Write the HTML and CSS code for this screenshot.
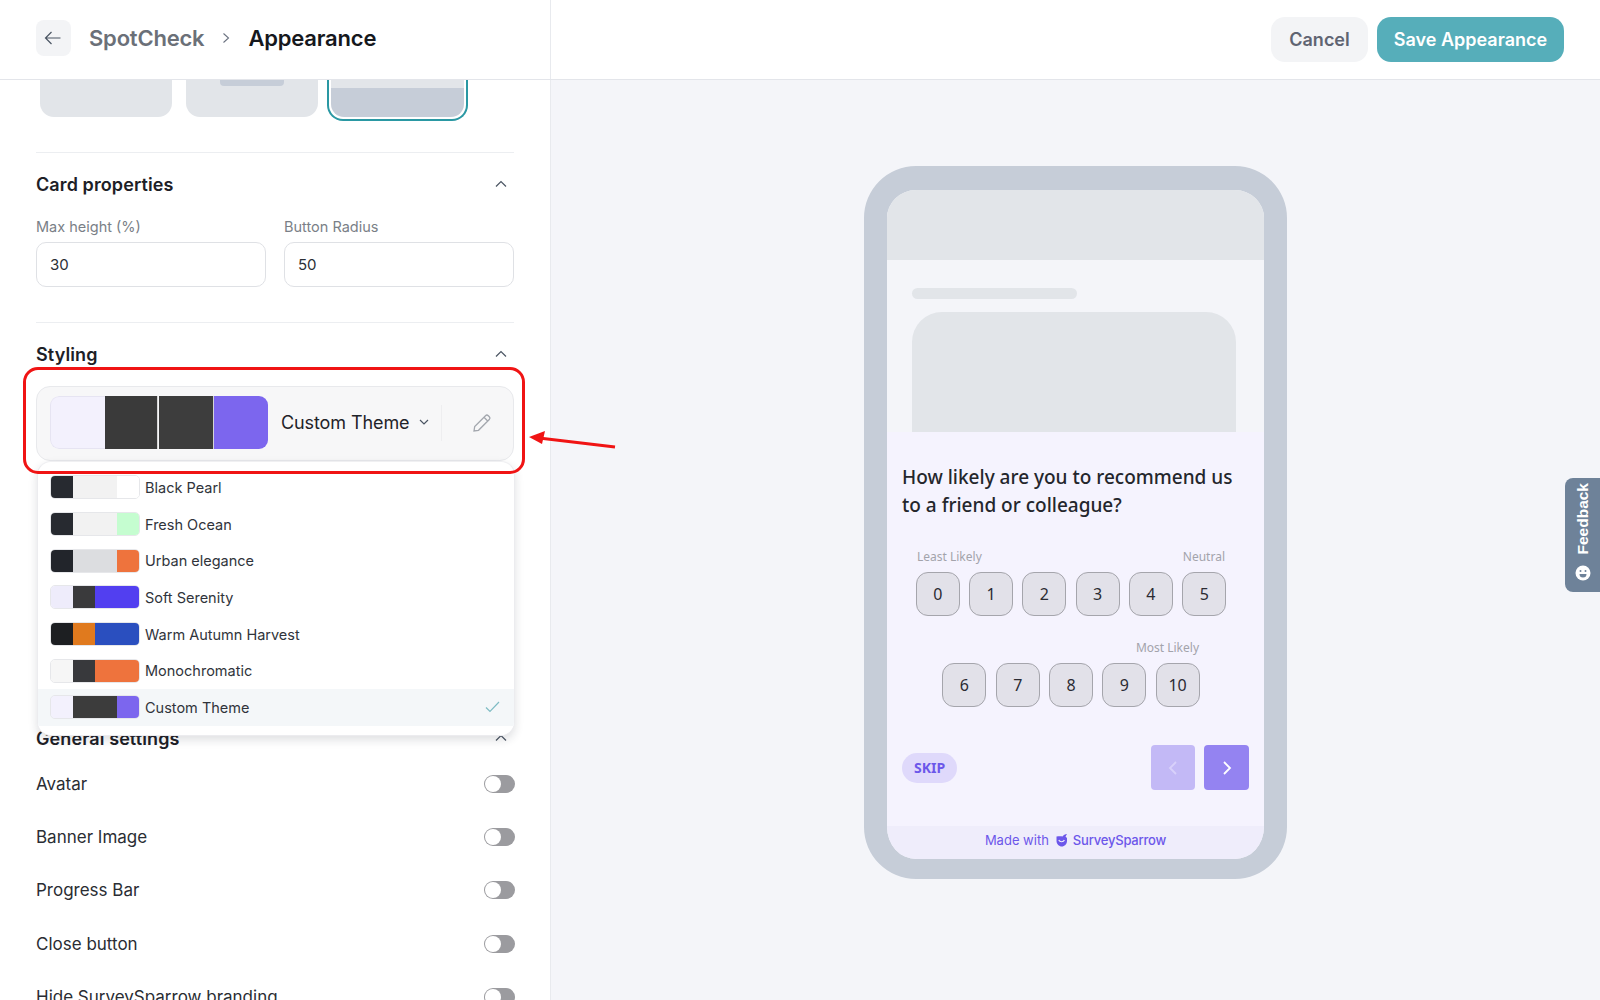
FILE: index.html
```html
<!DOCTYPE html>
<html lang="en">
<head>
    <meta charset="UTF-8">
    <meta name="viewport" content="width=device-width, initial-scale=1.0">
    <title>SpotCheck Appearance</title>
    <link rel="stylesheet" href="styles.css">
</head>
<body>
    <header class="topbar">
        <div class="crumbs">
            <button class="back-btn" aria-label="Back">
                <svg width="17" height="14" viewBox="0 0 17 14" fill="none" stroke="#4b5563" stroke-width="1.2"><path d="M16.5 7H1.5M7.5 1 1.5 7l6 6"/></svg>
            </button>
            <span class="crumb-parent">SpotCheck</span>
            <svg class="crumb-sep" width="8" height="12" viewBox="0 0 8 12" fill="none" stroke="#6b7280" stroke-width="1.1"><path d="m1.5 1.5 5 4.5-5 4.5"/></svg>
            <span class="crumb-current">Appearance</span>
        </div>
        <div class="actions">
            <button class="btn btn-cancel">Cancel</button>
            <button class="btn btn-save">Save Appearance</button>
        </div>
    </header>

    <main class="main">
        <aside class="sidebar">
            <div class="thumbs">
                <div class="thumb"></div>
                <div class="thumb"><span class="thumb-bar"></span></div>
                <div class="thumb thumb-active"><div class="thumb-inner"></div></div>
            </div>

            <section class="section section-card">
                <div class="section-head">
                    <h2>Card properties</h2>
                    <svg class="chev" width="12" height="8" viewBox="0 0 12 8" fill="none" stroke="#4b5563" stroke-width="1.2"><path d="m1 6.5 5-5 5 5"/></svg>
                </div>
                <div class="fields">
                    <div class="field">
                        <label>Max height (%)</label>
                        <div class="input">30</div>
                    </div>
                    <div class="field">
                        <label>Button Radius</label>
                        <div class="input">50</div>
                    </div>
                </div>
            </section>

            <section class="section section-styling">
                <div class="section-head">
                    <h2>Styling</h2>
                    <svg class="chev" width="12" height="8" viewBox="0 0 12 8" fill="none" stroke="#4b5563" stroke-width="1.2"><path d="m1 6.5 5-5 5 5"/></svg>
                </div>
                <div class="theme-box">
                    <div class="big-swatch">
                        <span class="seg-a"></span><span class="seg-b"></span><span class="seg-c"></span><span class="seg-d"></span>
                    </div>
                    <span class="theme-name">Custom Theme</span>
                    <svg class="theme-chev" width="10" height="7" viewBox="0 0 10 7" fill="none" stroke="#4b5563" stroke-width="1.2"><path d="m1 1 4 4 4-4"/></svg>
                    <span class="theme-div"></span>
                    <svg class="pencil" width="20" height="20" viewBox="0 0 20 20" fill="none" stroke="#a3a7ae" stroke-width="1.3"><path d="m2 18 .7-4.5L13.5 2.700a2 2 0 0 1 2.800 0l1 1a2 2 0 0 1 0 2.800L6.500 17.300ZM12 4.300l3.700 3.700"/></svg>
                </div>
            </section>

            <section class="section-general">
                <div class="section-head">
                    <h2>General settings</h2>
                    <svg class="chev" width="12" height="8" viewBox="0 0 12 8" fill="none" stroke="#4b5563" stroke-width="1.2"><path d="m1 6.5 5-5 5 5"/></svg>
                </div>
                <div class="toggle-row"><span>Avatar</span><span class="toggle"></span></div>
                <div class="toggle-row"><span>Banner Image</span><span class="toggle"></span></div>
                <div class="toggle-row"><span>Progress Bar</span><span class="toggle"></span></div>
                <div class="toggle-row"><span>Close button</span><span class="toggle"></span></div>
                <div class="toggle-row"><span>Hide SurveySparrow branding</span><span class="toggle"></span></div>
            </section>

            <div class="theme-menu">
                <div class="theme-opt">
                    <div class="mini"><span class="w1" style="background:#272a30"></span><span class="w2" style="background:#f2f2f2"></span><span class="w1" style="background:#fff"></span></div>
                    <span>Black Pearl</span>
                </div>
                <div class="theme-opt">
                    <div class="mini"><span class="w1" style="background:#272a30"></span><span class="w2" style="background:#f2f2f2"></span><span class="w1" style="background:#c5fdd0"></span></div>
                    <span>Fresh Ocean</span>
                </div>
                <div class="theme-opt">
                    <div class="mini"><span class="w1" style="background:#22252b"></span><span class="w2" style="background:#dcdde0"></span><span class="w1" style="background:#ee733d"></span></div>
                    <span>Urban elegance</span>
                </div>
                <div class="theme-opt">
                    <div class="mini"><span class="w1" style="background:#eeecfb"></span><span class="w1" style="background:#3a3a3c"></span><span class="w2" style="background:#523ff0"></span></div>
                    <span>Soft Serenity</span>
                </div>
                <div class="theme-opt">
                    <div class="mini"><span class="w1" style="background:#1d1f22"></span><span class="w1" style="background:#e07a1e"></span><span class="w2" style="background:#2a4fbf"></span></div>
                    <span>Warm Autumn Harvest</span>
                </div>
                <div class="theme-opt">
                    <div class="mini"><span class="w1" style="background:#f6f6f6"></span><span class="w1" style="background:#38393c"></span><span class="w2" style="background:#ee733d"></span></div>
                    <span>Monochromatic</span>
                </div>
                <div class="theme-opt theme-opt-active">
                    <div class="mini"><span class="w1" style="background:#f3f1fd"></span><span class="w2" style="background:#3c3c3c"></span><span class="w1" style="background:#7c66ee"></span></div>
                    <span>Custom Theme</span>
                    <svg class="check" width="15" height="12" viewBox="0 0 15 12" fill="none" stroke="#7fbcc4" stroke-width="1.2"><path d="m1 6.5 4 4L14 1"/></svg>
                </div>
            </div>

            <div class="red-box"></div>
        </aside>

        <section class="preview">
            <div class="phone">
                <div class="phone-top"></div>
                <div class="phone-body">
                    <div class="skel-line"></div>
                    <div class="skel-block"></div>
                </div>
                <div class="card">
                    <p class="question">How likely are you to recommend us<br>to a friend or colleague?</p>
                    <div class="scale-labels scale-labels-1"><span>Least Likely</span><span>Neutral</span></div>
                    <div class="scale-row">
                        <span class="num">0</span><span class="num">1</span><span class="num">2</span><span class="num">3</span><span class="num">4</span><span class="num">5</span>
                    </div>
                    <div class="scale-labels scale-labels-2"><span>Most Likely</span></div>
                    <div class="scale-row">
                        <span class="num">6</span><span class="num">7</span><span class="num">8</span><span class="num">9</span><span class="num">10</span>
                    </div>
                    <div class="card-nav">
                        <span class="skip">SKIP</span>
                        <div class="nav-btns">
                            <span class="nav-btn nav-prev"><svg width="10" height="16" viewBox="0 0 10 16" fill="none" stroke="#d8d1fa" stroke-width="1.8"><path d="M8 2 2 8l6 6"/></svg></span>
                            <span class="nav-btn nav-next"><svg width="10" height="16" viewBox="0 0 10 16" fill="none" stroke="#fff" stroke-width="1.8"><path d="m2 2 6 6-6 6"/></svg></span>
                        </div>
                    </div>
                </div>
                <div class="phone-foot">
                    <span>Made with</span>
                    <svg class="ss-logo" width="13" height="14" viewBox="0 0 13 14"><path d="M1.5 3.5C4 3 6 3 7.500 3.500 8.500 2 10 1 12 1l-1.500 2.500L12 5v3c0 3-2.500 5.500-5.200 5.500S1.500 11 1.500 8Z" fill="#6c57ea"/><path d="M3.800 7c1 2.300 4.600 2.300 5.600 0" fill="none" stroke="#efedfb" stroke-width="1.2"/></svg>
                    <span class="ss-name">SurveySparrow</span>
                </div>
            </div>
        </section>
    </main>

    <svg class="red-arrow" width="90" height="16" viewBox="0 0 90 16"><path d="M86 13 10 4" stroke="#f01414" stroke-width="3"/><path d="M0 3 16 -3 13 10Z" fill="#f01414"/></svg>

    <div class="feedback">
        <span class="feedback-text">Feedback</span>
        <svg width="16" height="16" viewBox="0 0 16 16"><circle cx="8" cy="8" r="7.5" fill="#fff"/><circle cx="5.5" cy="6" r="1" fill="#6e8299"/><circle cx="10.5" cy="6" r="1" fill="#6e8299"/><path d="M4.500 9h7a3.500 3.500 0 0 1-7 0Z" fill="#6e8299"/></svg>
    </div>
</body>
</html>
```

FILE: styles.css
```css
*{
    box-sizing: border-box;
}
body{
    font-family: Inter, "Liberation Sans", sans-serif;
    margin: 0;
    padding: 0;
    height: 1000px;
    overflow: hidden;
    color: #1f2329;
    background: #f4f5f9;
    position: relative;
}
button{
    font-family: inherit;
    border: none;
}
h2{
    margin: 0;
    font-size: 18px;
    font-weight: 600;
    letter-spacing: 0.1px;
    color: #1d2026;
}

/* top bar */
.topbar{
    height: 80px;
    display: flex;
    background: #fff;
    border-bottom: 1px solid #e3e5ea;
}
.crumbs{
    width: 551px;
    display: flex;
    align-items: center;
    padding: 0 0 3px 36px;
    border-right: 1px solid #e8eaee;
}
.back-btn{
    width: 35px;
    height: 36px;
    margin-right: 18px;
    border-radius: 8px;
    background: #f3f4f6;
    display: flex;
    align-items: center;
    justify-content: center;
    padding: 0 2px 0 0;
}
.crumb-parent{
    font-size: 22px;
    font-weight: 600;
    letter-spacing: -0.2px;
    color: #6b7078;
}
.crumb-sep{
    margin: 0 18px;
}
.crumb-current{
    font-size: 22px;
    font-weight: 600;
    letter-spacing: -0.2px;
    color: #16181d;
}
.actions{
    flex: 1;
    display: flex;
    justify-content: flex-end;
    gap: 9px;
    padding: 17px 36px 0 0;
}
.btn{
    height: 45px;
    border-radius: 14px;
    font-size: 18px;
    font-weight: 600;
}
.btn-cancel{
    width: 97px;
    background: #f3f4f6;
    color: #5f6472;
}
.btn-save{
    width: 187px;
    background: #56aeba;
    color: #fff;
}

/* left panel */
.main{
    display: flex;
    height: 920px;
}
.sidebar{
    width: 551px;
    flex-shrink: 0;
    padding: 0 36px;
    background: #fff;
    border-right: 1px solid #e8eaee;
    position: relative;
    overflow: hidden;
}
.thumbs{
    display: flex;
    padding-left: 4px;
    gap: 14px;
}
.thumb{
    width: 132px;
    height: 37px;
    background: #e2e5e9;
    border-radius: 0 0 14px 14px;
    display: flex;
    justify-content: center;
}
.thumb-bar{
    width: 64px;
    height: 6px;
    background: #c6cdd8;
    border-radius: 0 0 4px 4px;
}
.thumb-active{
    width: 141px;
    height: 41px;
    margin-left: -5px;
    background: #fff;
    border: 2px solid #2a98a3;
    border-top: none;
    border-radius: 0 0 16px 16px;
    padding: 0 2px 2px;
}
.thumb-inner{
    width: 100%;
    height: 100%;
    border-radius: 0 0 13px 13px;
    background: linear-gradient(#e2e5e9 8px, #c6cdd8 8px);
}
.section{
    border-top: 1px solid #eceef1;
}
.section-card{
    margin-top: 31px;
    height: 170px;
    padding-top: 20px;
}
.section-styling{
    padding-top: 20px;
}
.section-head{
    display: flex;
    justify-content: space-between;
    align-items: center;
    height: 22px;
}
.chev{
    margin-right: 7px;
}
.fields{
    display: flex;
    gap: 18px;
    margin-top: 23px;
}
.field{
    flex: 1;
}
.field label{
    display: block;
    font-size: 14.5px;
    color: #7a7f87;
    margin-bottom: 6px;
    line-height: 18px;
}
.input{
    height: 45px;
    border: 1px solid #dfe1e5;
    border-radius: 10px;
    padding: 0 13px;
    font-size: 15px;
    line-height: 43px;
    color: #2b2f36;
}
.theme-box{
    margin-top: 21px;
    height: 75px;
    background: #f7f7f8;
    border: 1px solid #e8e9ec;
    border-radius: 14px;
    display: flex;
    align-items: center;
    padding-left: 13px;
}
.big-swatch{
    width: 218px;
    height: 53px;
    display: flex;
    border-radius: 9px;
    overflow: hidden;
    flex-shrink: 0;
    margin-top: -2px;
}
.big-swatch span{
    height: 100%;
}
.seg-a{
    width: 55px;
    background: #f3f1fd;
    border: 1px solid #e6e4f2;
    border-right: none;
    border-radius: 9px 0 0 9px;
}
.seg-b{
    width: 53px;
    background: #3a3a3a;
    border-right: 1px solid #d5d5d5;
}
.seg-c{
    width: 55px;
    background: #3d3d3d;
    border-right: 1px solid #d5d5d5;
    margin-left: 1px;
}
.seg-d{
    width: 54px;
    background: #7c66ee;
}
.theme-name{
    margin-left: 13px;
    margin-top: -2px;
    font-size: 18px;
    letter-spacing: -0.1px;
    color: #1f2329;
}
.theme-chev{
    margin: -2px 0 0 10px;
}
.theme-div{
    width: 1px;
    height: 36px;
    background: #eeeef0;
    margin: -2px 0 0 12px;
}
.pencil{
    margin: -2px 0 0 30px;
}

/* flows under the open menu */
.section-general{
    margin-top: 271px;
}
.toggle-row{
    display: flex;
    justify-content: space-between;
    align-items: center;
    height: 53.4px;
    font-size: 17px;
    color: #2a2d33;
}
.section-general .section-head{
    margin-bottom: 13px;
    height: 12px;
}
.toggle{
    width: 31px;
    height: 18px;
    margin-right: -1px;
    border-radius: 9px;
    background: #9b9b9f;
    position: relative;
}
.toggle::after{
    content: "";
    position: absolute;
    left: 1px;
    top: 1px;
    width: 16px;
    height: 16px;
    border-radius: 50%;
    background: #fff;
}

/* dropdown and annotation lie over the panel */
.theme-menu{
    position: absolute;
    left: 37px;
    top: 381px;
    width: 478px;
    height: 275px;
    padding-top: 7px;
    background: #fff;
    border: 1px solid #ececef;
    border-top-color: #f0f0f2;
    border-radius: 14px;
    box-shadow: 0 4px 10px rgba(30,35,50,0.14);
    overflow: hidden;
}
.theme-opt{
    height: 36.7px;
    display: flex;
    align-items: center;
    padding-left: 12px;
    font-size: 14.5px;
    color: #30343b;
}
.theme-opt-active{
    background: #f4f7f9;
}
.mini{
    width: 90px;
    height: 24px;
    display: flex;
    margin-right: 5px;
    border: 1px solid #e6e7ea;
    border-radius: 5px;
    overflow: hidden;
}
.mini .w1{
    flex: 1;
}
.mini .w2{
    flex: 2;
}
.check{
    margin-left: auto;
    margin-right: 14px;
}
.red-box{
    position: absolute;
    left: 23px;
    top: 287px;
    width: 502px;
    height: 107px;
    border: 3px solid #f01414;
    border-radius: 15px;
}
.red-arrow{
    position: absolute;
    left: 529px;
    top: 434px;
    overflow: visible;
}

/* phone preview */
.preview{
    flex: 1;
    padding: 86px 0 0 313px;
}
.phone{
    width: 423px;
    height: 713px;
    border: solid #c6cdd8;
    border-width: 24px 23px 20px 23px;
    border-radius: 52px;
    background: #f4f5f9;
    overflow: hidden;
    display: flex;
    flex-direction: column;
}
.phone-top{
    height: 70px;
    background: #e2e5e9;
    flex-shrink: 0;
}
.phone-body{
    height: 172px;
    padding: 28px 25px 0;
    flex-shrink: 0;
}
.skel-line{
    width: 165px;
    height: 11px;
    border-radius: 6px;
    background: #e2e5e9;
}
.skel-block{
    height: 120px;
    margin-top: 13px;
    border-radius: 30px 30px 0 0;
    background: #e2e5e9;
    width: 324px;
}
.card{
    flex: 1;
    background: #f5f3fe;
    padding: 31px 15px 0;
}
.question{
    margin: 0;
    font-family: "Noto Sans", sans-serif;
    font-size: 19px;
    font-weight: 500;
    line-height: 28px;
    color: #24262c;
}
.scale-labels{
    display: flex;
    justify-content: space-between;
    font-family: "Noto Sans", sans-serif;
    font-size: 12px;
    color: #a3a3ab;
    line-height: 16px;
}
.scale-labels-1{
    margin-top: 30px;
    padding: 0 24px 0 15px;
    margin-bottom: 7px;
}
.scale-labels-2{
    justify-content: flex-end;
    margin-top: 24px;
    padding-right: 50px;
    margin-bottom: 7px;
}
.scale-row{
    display: flex;
    justify-content: center;
    gap: 9.3px;
    padding-right: 9px;
}
.num{
    width: 44px;
    height: 44px;
    border: 1px solid #a5a5ac;
    border-radius: 12px;
    background: #e2e1e9;
    display: flex;
    align-items: center;
    justify-content: center;
    font-family: "Noto Sans", sans-serif;
    font-size: 16px;
    color: #2b2b33;
}
.card-nav{
    display: flex;
    justify-content: space-between;
    align-items: center;
    margin-top: 38px;
}
.skip{
    width: 55px;
    height: 30px;
    border-radius: 15px;
    background: #dfd9fb;
    display: flex;
    align-items: center;
    justify-content: center;
    font-family: "Noto Sans", sans-serif;
    font-size: 14px;
    font-weight: 700;
    color: #6c57ea;
}
.nav-btns{
    display: flex;
    gap: 9px;
}
.nav-btn{
    width: 45px;
    height: 45px;
    border-radius: 4px;
    display: flex;
    align-items: center;
    justify-content: center;
}
.nav-prev{
    width: 44px;
    background: #c3b9f6;
}
.nav-next{
    background: #9483f1;
}
.phone-foot{
    height: 33px;
    padding-bottom: 5px;
    background: #efedfb;
    display: flex;
    align-items: center;
    justify-content: center;
    font-size: 13px;
    color: #6c57ea;
    flex-shrink: 0;
}
.ss-logo{
    margin: 0 5px 0 6px;
}
.ss-name{
    font-weight: 500;
    letter-spacing: -0.2px;
}

/* feedback tab */
.feedback{
    position: absolute;
    right: 0;
    top: 478px;
    width: 35px;
    height: 114px;
    padding-bottom: 6px;
    background: #6e8299;
    border-radius: 8px 0 0 8px;
    display: flex;
    flex-direction: column;
    align-items: center;
    justify-content: center;
    gap: 10px;
}
.feedback-text{
    writing-mode: vertical-rl;
    transform: rotate(180deg);
    font-family: "Liberation Sans", sans-serif;
    font-size: 15.5px;
    font-weight: 700;
    color: #fff;
}
```
